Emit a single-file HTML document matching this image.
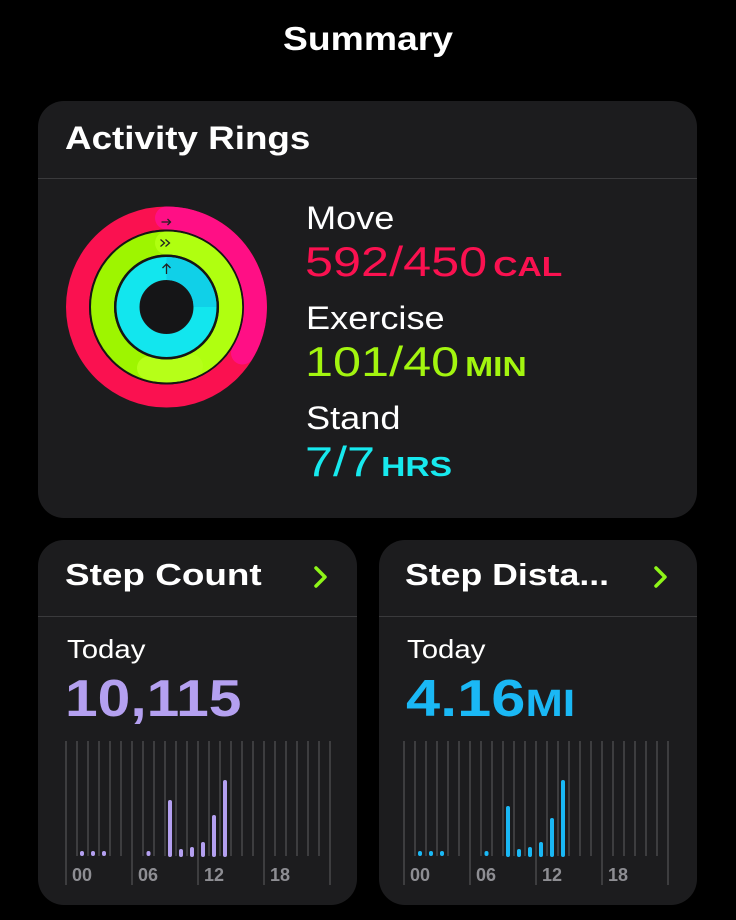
<!DOCTYPE html>
<html><head><meta charset="utf-8"><style>
*{margin:0;padding:0;box-sizing:border-box}
body{width:736px;height:920px;background:#000;font-family:"Liberation Sans",sans-serif;color:#fff;position:relative;overflow:hidden}
.t{position:absolute;white-space:nowrap;transform-origin:0 0}
.card{position:absolute;background:#1c1c1e;border-radius:26px;overflow:hidden}
.sep{position:absolute;left:0;right:0;height:1px;background:#3a3a3c}
b{font-weight:700}
</style></head><body>
<div class="t" style="left:0;width:736px;text-align:center;top:20px;font-size:33px;font-weight:700;transform:scaleX(1.13);transform-origin:368px 0">Summary</div>

<div class="card" style="left:38px;top:101px;width:659px;height:417px">
  <div class="t" style="left:27px;top:19px;font-size:32px;font-weight:700;transform:scaleX(1.15)">Activity Rings</div>
  <div class="sep" style="top:77px"></div>
  <svg style="position:absolute;left:0;top:0" width="659" height="417">
    <g transform="translate(128.5,206)">
      <circle r="89" fill="none" stroke="#fa1150" stroke-width="23"/>
      <path d="M0,-89 A89,89 0 0 1 76,46" fill="none" stroke="#ff0f85" stroke-width="23" stroke-linecap="round"/>
      <circle r="76" fill="none" stroke="#151515" stroke-width="3"/>
      <circle r="64" fill="none" stroke="#9ef500" stroke-width="23"/>
      <path d="M0,-64 A64,64 0 0 1 25,59" fill="none" stroke="#b0ff10" stroke-width="23" stroke-linecap="round"/>
      <path d="M-18,61 A64,64 0 0 0 25,59" fill="none" stroke="#b6ff18" stroke-width="23" stroke-linecap="round"/>
      <circle r="51" fill="none" stroke="#151515" stroke-width="3"/>
      <circle r="38.5" fill="none" stroke="#12e6ee" stroke-width="23"/>
      <path d="M0,-38.5 A38.5,38.5 0 0 1 38.5,0" fill="none" stroke="#10d0e8" stroke-width="23"/>
      <circle r="26.5" fill="#151517"/>
      <path d="M-5,-85 h9 m-3,-3 l3,3 l-3,3" stroke="#222" stroke-width="1.3" fill="none"/>
      <path d="M-6,-67.5 l4,3.5 l-4,3.5 M-1,-67.5 l4,3.5 l-4,3.5" stroke="#222" stroke-width="1.3" fill="none"/>
      <path d="M0,-33 v-10 m-4,4 l4,-4 l4,4" stroke="#222" stroke-width="1.3" fill="none"/>
    </g>
  </svg>
  <div class="t" style="left:268px;top:99px;font-size:32px;transform:scaleX(1.13)">Move</div>
  <div class="t" style="left:267px;top:137px;font-size:42px;color:#fa1150;transform:scaleX(1.2)">592/450<b style="font-size:28px;margin-left:5px">CAL</b></div>
  <div class="t" style="left:268px;top:199px;font-size:32px;transform:scaleX(1.13)">Exercise</div>
  <div class="t" style="left:267px;top:237px;font-size:42px;color:#a3f50f;transform:scaleX(1.2)">101/40<b style="font-size:28px;margin-left:5px">MIN</b></div>
  <div class="t" style="left:268px;top:299px;font-size:32px;transform:scaleX(1.13)">Stand</div>
  <div class="t" style="left:267px;top:337px;font-size:42px;color:#17e9ee;transform:scaleX(1.2)">7/7<b style="font-size:28px;margin-left:5px">HRS</b></div>
</div>

<div class="card" style="left:38px;top:540px;width:319px;height:365px">
  <div class="t" style="left:27px;top:17px;font-size:31px;font-weight:700;transform:scaleX(1.19)">Step Count</div>
  <svg style="position:absolute;left:273px;top:24px" width="20" height="26"><path d="M5,4 L14,13 L5,22" stroke="#8ef518" stroke-width="3.5" fill="none" stroke-linecap="round" stroke-linejoin="round"/></svg>
  <div class="sep" style="top:76px"></div>
  <div class="t" style="left:29px;top:94px;font-size:26px;transform:scaleX(1.13)">Today</div>
  <div class="t" style="left:27px;top:129px;font-size:52px;font-weight:700;color:#b4a0f0;transform:scaleX(1.13)">10,115</div>
  <svg style="position:absolute;left:0;top:0" width="319" height="365">
    <g stroke="#48484a" stroke-width="1.5">
      <line x1="28" y1="201" x2="28" y2="345"/><line x1="39" y1="201" x2="39" y2="316"/><line x1="50" y1="201" x2="50" y2="316"/><line x1="61" y1="201" x2="61" y2="316"/><line x1="72" y1="201" x2="72" y2="316"/><line x1="83" y1="201" x2="83" y2="316"/>
      <line x1="94" y1="201" x2="94" y2="345"/><line x1="105" y1="201" x2="105" y2="316"/><line x1="116" y1="201" x2="116" y2="316"/><line x1="127" y1="201" x2="127" y2="316"/><line x1="138" y1="201" x2="138" y2="316"/><line x1="149" y1="201" x2="149" y2="316"/>
      <line x1="160" y1="201" x2="160" y2="345"/><line x1="171" y1="201" x2="171" y2="316"/><line x1="182" y1="201" x2="182" y2="316"/><line x1="193" y1="201" x2="193" y2="316"/><line x1="204" y1="201" x2="204" y2="316"/><line x1="215" y1="201" x2="215" y2="316"/>
      <line x1="226" y1="201" x2="226" y2="345"/><line x1="237" y1="201" x2="237" y2="316"/><line x1="248" y1="201" x2="248" y2="316"/><line x1="259" y1="201" x2="259" y2="316"/><line x1="270" y1="201" x2="270" y2="316"/><line x1="281" y1="201" x2="281" y2="316"/>
      <line x1="292" y1="201" x2="292" y2="345"/>
    </g>
    <g fill="#8e8e93" font-size="18" font-family="Liberation Sans" font-weight="700">
      <text x="34" y="341">00</text><text x="100" y="341">06</text><text x="166" y="341">12</text><text x="232" y="341">18</text>
    </g>
    <g stroke="#b4a0f0" stroke-width="4" stroke-linecap="round">
      <line x1="44" y1="313" x2="44" y2="314"/><line x1="55" y1="313" x2="55" y2="314"/><line x1="66" y1="313" x2="66" y2="314"/>
      <line x1="110.5" y1="313" x2="110.5" y2="314"/>
      <line x1="132" y1="262" x2="132" y2="315"/><line x1="143" y1="311" x2="143" y2="315"/><line x1="154" y1="309" x2="154" y2="315"/>
      <line x1="165" y1="304" x2="165" y2="315"/><line x1="176" y1="277" x2="176" y2="315"/><line x1="187" y1="242" x2="187" y2="315"/>
    </g>
  </svg>
</div>

<div class="card" style="left:379px;top:540px;width:318px;height:365px">
  <div class="t" style="left:26px;top:17px;font-size:31px;font-weight:700;transform:scaleX(1.15)">Step Dista...</div>
  <svg style="position:absolute;left:272px;top:24px" width="20" height="26"><path d="M5,4 L14,13 L5,22" stroke="#8ef518" stroke-width="3.5" fill="none" stroke-linecap="round" stroke-linejoin="round"/></svg>
  <div class="sep" style="top:76px"></div>
  <div class="t" style="left:28px;top:94px;font-size:26px;transform:scaleX(1.13)">Today</div>
  <div class="t" style="left:27px;top:129px;font-size:52px;font-weight:700;color:#1ab8f5;transform:scaleX(1.18)">4.16<span style="font-size:38px">MI</span></div>
  <svg style="position:absolute;left:-3px;top:0" width="321" height="365">
    <g stroke="#48484a" stroke-width="1.5">
      <line x1="28" y1="201" x2="28" y2="345"/><line x1="39" y1="201" x2="39" y2="316"/><line x1="50" y1="201" x2="50" y2="316"/><line x1="61" y1="201" x2="61" y2="316"/><line x1="72" y1="201" x2="72" y2="316"/><line x1="83" y1="201" x2="83" y2="316"/>
      <line x1="94" y1="201" x2="94" y2="345"/><line x1="105" y1="201" x2="105" y2="316"/><line x1="116" y1="201" x2="116" y2="316"/><line x1="127" y1="201" x2="127" y2="316"/><line x1="138" y1="201" x2="138" y2="316"/><line x1="149" y1="201" x2="149" y2="316"/>
      <line x1="160" y1="201" x2="160" y2="345"/><line x1="171" y1="201" x2="171" y2="316"/><line x1="182" y1="201" x2="182" y2="316"/><line x1="193" y1="201" x2="193" y2="316"/><line x1="204" y1="201" x2="204" y2="316"/><line x1="215" y1="201" x2="215" y2="316"/>
      <line x1="226" y1="201" x2="226" y2="345"/><line x1="237" y1="201" x2="237" y2="316"/><line x1="248" y1="201" x2="248" y2="316"/><line x1="259" y1="201" x2="259" y2="316"/><line x1="270" y1="201" x2="270" y2="316"/><line x1="281" y1="201" x2="281" y2="316"/>
      <line x1="292" y1="201" x2="292" y2="345"/>
    </g>
    <g fill="#8e8e93" font-size="18" font-family="Liberation Sans" font-weight="700">
      <text x="34" y="341">00</text><text x="100" y="341">06</text><text x="166" y="341">12</text><text x="232" y="341">18</text>
    </g>
    <g stroke="#1ab8f5" stroke-width="4" stroke-linecap="round">
      <line x1="44" y1="313" x2="44" y2="314"/><line x1="55" y1="313" x2="55" y2="314"/><line x1="66" y1="313" x2="66" y2="314"/>
      <line x1="110.5" y1="313" x2="110.5" y2="314"/>
      <line x1="132" y1="268" x2="132" y2="315"/><line x1="143" y1="311" x2="143" y2="315"/><line x1="154" y1="309" x2="154" y2="315"/>
      <line x1="165" y1="304" x2="165" y2="315"/><line x1="176" y1="280" x2="176" y2="315"/><line x1="187" y1="242" x2="187" y2="315"/>
    </g>
  </svg>
</div>
</body></html>
